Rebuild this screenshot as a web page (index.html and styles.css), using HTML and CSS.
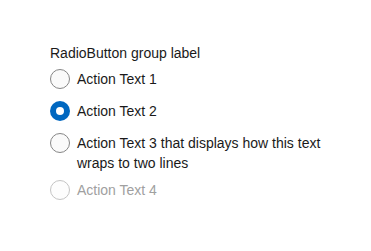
FILE: index.html
```html
<!DOCTYPE html>
<html>
<head>
<meta charset="utf-8">
<link rel="stylesheet" href="styles.css">
</head>
<body>
<div class="group" role="radiogroup">
  <div class="header">RadioButton group label</div>
  <label class="radio">
    <span class="circle"></span>
    <span class="text">Action Text 1</span>
  </label>
  <label class="radio checked">
    <span class="circle"></span>
    <span class="text">Action Text 2</span>
  </label>
  <label class="radio">
    <span class="circle"></span>
    <span class="text">Action Text 3 that displays how this text wraps to two lines</span>
  </label>
  <label class="radio disabled">
    <span class="circle"></span>
    <span class="text">Action Text 4</span>
  </label>
</div>
</body>
</html>
```
FILE: styles.css
```css
html, body {
  margin: 0;
  padding: 0;
  background: #ffffff;
}
body {
  font-family: "Segoe UI", "Liberation Sans", sans-serif;
  font-size: 14px;
  color: #1a1a1a;
}
.group {
  display: flex;
  flex-direction: column;
  padding: 43px 0 0 50px;
  width: 300px;
}
.header {
  line-height: 20px;
}
.radio {
  display: flex;
  align-items: flex-start;
  min-height: 32px;
  box-sizing: border-box;
}
.radio .circle {
  flex: none;
  width: 20px;
  height: 20px;
  box-sizing: border-box;
  border: 1px solid #868686;
  border-radius: 50%;
  margin-top: 6px;
  background: #fafafa;
  display: flex;
  align-items: center;
  justify-content: center;
}
.radio .text {
  padding: 6px 0 1px 7px;
  line-height: 20px;
  width: 262px;
}
.radio.checked .circle {
  border: none;
  background: #0067c0;
}
.radio.checked .circle::after {
  content: "";
  width: 8px;
  height: 8px;
  border-radius: 50%;
  background: #ffffff;
}
.radio.disabled .circle {
  border-color: #c4c4c4;
  background: #fdfdfd;
}
.radio.disabled .text {
  color: #a0a0a0;
}
```
